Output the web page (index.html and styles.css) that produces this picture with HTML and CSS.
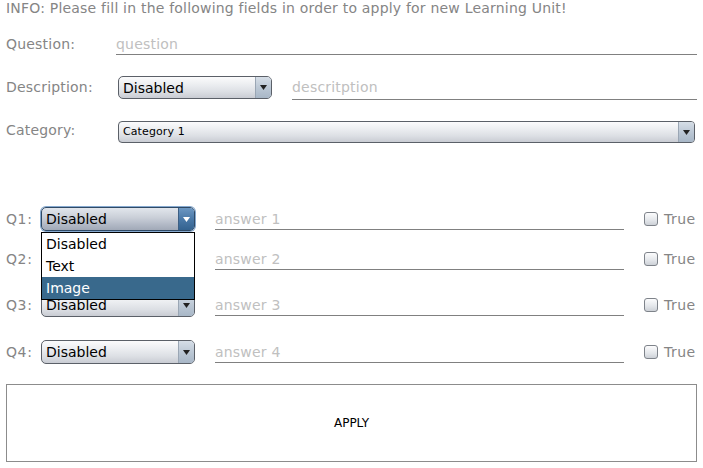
FILE: index.html
```html
<!DOCTYPE html>
<html>
<head>
<meta charset="utf-8">
<link rel="stylesheet" href="styles.css">
</head>
<body>
<div class="page">
  <p class="info">INFO: Please fill in the following fields in order to apply for new Learning Unit!</p>

  <div class="row row-question">
    <span class="label label-wide">Question:</span>
    <input class="line" type="text" placeholder="question">
  </div>

  <div class="row row-description">
    <span class="label label-wide2">Description:</span>
    <div class="combo combo-desc">
      <span class="combo-text">Disabled</span>
      <span class="combo-btn"><svg width="7" height="5" viewBox="0 0 7 5"><polygon points="0,0 7,0 3.5,5" fill="#222"/></svg></span>
    </div>
    <input class="line line-gap" type="text" placeholder="descritption">
  </div>

  <div class="row row-category">
    <span class="label label-wide2 label-top">Category:</span>
    <div class="combo combo-cat">
      <span class="combo-text small">Category 1</span>
      <span class="combo-btn"><svg width="7" height="5" viewBox="0 0 7 5"><polygon points="0,0 7,0 3.5,5" fill="#222"/></svg></span>
    </div>
  </div>

  <div class="row qrow q1">
    <span class="label qlabel">Q1:</span>
    <div class="combo-wrap">
      <div class="combo combo-q focused">
        <span class="combo-text">Disabled</span>
        <span class="combo-btn"><svg width="7" height="5" viewBox="0 0 7 5"><polygon points="0,0 7,0 3.5,5" fill="#fff"/></svg></span>
      </div>
      <ul class="popup">
        <li>Disabled</li>
        <li>Text</li>
        <li class="sel">Image</li>
      </ul>
    </div>
    <input class="line line-answer" type="text" placeholder="answer 1">
    <label class="check"><span class="box"></span>True</label>
  </div>

  <div class="row qrow q2">
    <span class="label qlabel">Q2:</span>
    <div class="combo combo-q">
      <span class="combo-text">Disabled</span>
      <span class="combo-btn"><svg width="7" height="5" viewBox="0 0 7 5"><polygon points="0,0 7,0 3.5,5" fill="#222"/></svg></span>
    </div>
    <input class="line line-answer" type="text" placeholder="answer 2">
    <label class="check"><span class="box"></span>True</label>
  </div>

  <div class="row qrow q3">
    <span class="label qlabel">Q3:</span>
    <div class="combo combo-q">
      <span class="combo-text">Disabled</span>
      <span class="combo-btn"><svg width="7" height="5" viewBox="0 0 7 5"><polygon points="0,0 7,0 3.5,5" fill="#222"/></svg></span>
    </div>
    <input class="line line-answer" type="text" placeholder="answer 3">
    <label class="check"><span class="box"></span>True</label>
  </div>

  <div class="row qrow q4">
    <span class="label qlabel">Q4:</span>
    <div class="combo combo-q">
      <span class="combo-text">Disabled</span>
      <span class="combo-btn"><svg width="7" height="5" viewBox="0 0 7 5"><polygon points="0,0 7,0 3.5,5" fill="#222"/></svg></span>
    </div>
    <input class="line line-answer" type="text" placeholder="answer 4">
    <label class="check"><span class="box"></span>True</label>
  </div>

  <button class="apply" type="button">APPLY</button>
</div>
</body>
</html>
```

FILE: styles.css
```css
* { box-sizing: border-box; }

html, body {
  margin: 0;
  padding: 0;
  background: #ffffff;
}

body {
  font-family: "DejaVu Sans", "Liberation Sans", sans-serif;
  font-size: 14px;
  color: #858585;
}

.page {
  display: flex;
  flex-direction: column;
  padding: 0 6px;
  width: 703px;
  height: 468px;
}

.info {
  margin: 0;
  height: 32px;
  line-height: 16px;
  letter-spacing: 0.2px;
}

.row {
  display: flex;
  align-items: center;
}

.label {
  flex: none;
  line-height: 16px;
  white-space: nowrap;
  letter-spacing: 0.2px;
}

.label-wide { width: 110px; }
.label-wide2 { width: 112px; }
.label-top { align-self: flex-start; padding-top: 1px; }
.qlabel { width: 35px; letter-spacing: 0.6px; }

.row-question { height: 24px; }
.row-description { height: 24px; margin-top: 19px; }
.row-category { height: 22px; margin-top: 22px; align-items: stretch; }
.q1 { height: 24px; margin-top: 64px; }
.q2 { height: 24px; margin-top: 16px; }
.q3 { height: 24px; margin-top: 22px; }
.q4 { height: 24px; margin-top: 23px; }

.line {
  flex: 1;
  min-width: 0;
  height: 22px;
  margin: 0;
  padding: 0;
  border: none;
  border-bottom: 1px solid #808080;
  background: transparent;
  font-family: "DejaVu Sans", "Liberation Sans", sans-serif;
  font-size: 14px;
  letter-spacing: 0.2px;
  color: #333;
  outline: none;
}

.line::placeholder { color: #c0c0c0; }

.row-question .line { height: 22px; }
.row-description .line { height: 25px; align-self: flex-end; margin-bottom: -1px; }
.line-gap { margin-left: 20px; }
.line-answer { margin: 0 20px; }

.combo {
  flex: none;
  display: flex;
  align-items: stretch;
  width: 154px;
  height: 23px;
  border: 1px solid #5b6068;
  border-radius: 5px;
  overflow: hidden;
  background: linear-gradient(to bottom, #fbfbfc 0%, #eceef1 35%, #dcdfe4 70%, #c9ccd3 100%);
  color: #000;
}

.combo-cat {
  flex: 1;
  width: auto;
  height: 22px;
  margin-right: 2px;
  border-radius: 4px;
}

.combo-q { height: 24px; }

.combo-text {
  flex: 1;
  padding-left: 4px;
  line-height: 22px;
  font-size: 14px;
  white-space: nowrap;
}

.combo-text.small {
  font-size: 11px;
  line-height: 20px;
  padding-left: 4px;
  letter-spacing: 0.1px;
}

.combo-btn {
  flex: none;
  width: 16px;
  display: flex;
  align-items: center;
  justify-content: center;
  border-left: 1px solid #9aa6b4;
  background: linear-gradient(to bottom, #d6dee7 0%, #bcc8d5 50%, #a8b7c7 100%);
}

.combo-wrap {
  position: relative;
  flex: none;
  width: 154px;
  height: 24px;
}

.combo.focused {
  border-color: #2f4a66;
  box-shadow: 0 0 0 1px #86a9cf;
  background: linear-gradient(to bottom, #e2e6ec 0%, #c9ced7 45%, #b2b9c6 75%, #a1a9b7 100%);
}

.combo.focused .combo-btn {
  border-left-color: #3c5f84;
  background: linear-gradient(to bottom, #6c97c2 0%, #4a79a8 50%, #33628f 100%);
}

.popup {
  position: absolute;
  top: 25px;
  left: 0;
  width: 154px;
  margin: 0;
  padding: 0;
  list-style: none;
  border: 1px solid #000;
  background: #fff;
  z-index: 2;
}

.popup li {
  height: 22px;
  line-height: 22px;
  padding-left: 4px;
  color: #000;
  font-size: 14px;
}

.popup li.sel {
  background: #39698c;
  color: #fff;
}

.check {
  flex: none;
  width: 53px;
  display: flex;
  align-items: center;
  line-height: 16px;
  letter-spacing: 0.5px;
}

.box {
  width: 14px;
  height: 14px;
  margin-right: 6px;
  border: 1px solid #7e838a;
  border-radius: 3px;
  background: linear-gradient(to bottom, #fcfcfd 0%, #e3e6ea 60%, #cdd1d7 100%);
}

.apply {
  margin-top: 20px;
  height: 78px;
  width: 100%;
  border: 1px solid #8c8c8c;
  background: #fff;
  font-family: "DejaVu Sans", "Liberation Sans", sans-serif;
  font-size: 12px;
  color: #000;
  padding: 0;
}
```
